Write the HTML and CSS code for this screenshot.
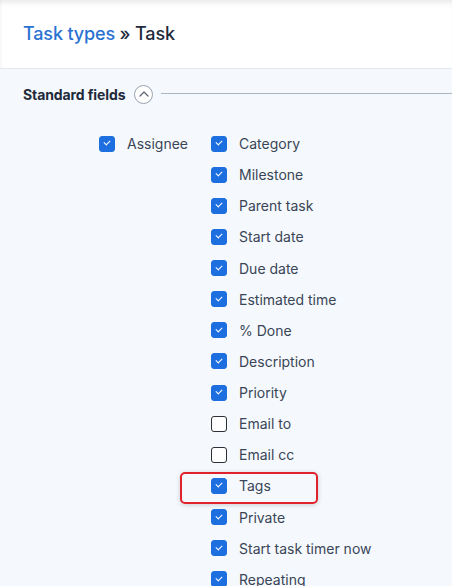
FILE: index.html
```html
<!DOCTYPE html>
<html>
<head>
<meta charset="utf-8">
<link rel="stylesheet" href="styles.css">
</head>
<body>
<header class="header">
  <h1 class="title"><a class="crumb">Task types</a> » Task</h1>
</header>
<main class="content">
  <div class="section-head">
    <span class="section-title">Standard fields</span>
    <span class="toggle">
      <svg width="12" height="8" viewBox="0 0 12 8"><path d="M2 6 L6 2 L10 6" fill="none" stroke="#5a6472" stroke-width="1.2" stroke-linecap="round" stroke-linejoin="round"/></svg>
    </span>
    <span class="rule"></span>
  </div>
  <div class="fields">
    <div class="col">
      <label class="field"><span class="cb on"></span>Assignee</label>
    </div>
    <div class="col">
      <label class="field"><span class="cb on"></span>Category</label>
      <label class="field"><span class="cb on"></span>Milestone</label>
      <label class="field"><span class="cb on"></span>Parent task</label>
      <label class="field"><span class="cb on"></span>Start date</label>
      <label class="field"><span class="cb on"></span>Due date</label>
      <label class="field"><span class="cb on"></span>Estimated time</label>
      <label class="field"><span class="cb on"></span>% Done</label>
      <label class="field"><span class="cb on"></span>Description</label>
      <label class="field"><span class="cb on"></span>Priority</label>
      <label class="field"><span class="cb"></span>Email to</label>
      <label class="field"><span class="cb"></span>Email cc</label>
      <label class="field highlight"><span class="cb on"></span>Tags</label>
      <label class="field"><span class="cb on"></span>Private</label>
      <label class="field"><span class="cb on"></span>Start task timer now</label>
      <label class="field"><span class="cb on"></span>Repeating</label>
    </div>
  </div>
</main>
</body>
</html>
```
FILE: styles.css
```css
html, body {
  margin: 0;
  padding: 0;
}
body {
  font-family: Inter, "Noto Sans", sans-serif;
  background: #f5f9fd;
  overflow: hidden;
  height: 586px;
}
.header {
  height: 69px;
  background: #fff;
  border-bottom: 1px solid #e2e8ef;
  box-shadow: inset 0 6px 6px -4px rgba(0,0,0,0.10), inset 3px 0 4px -3px rgba(0,0,0,0.06);
  display: flex;
  align-items: center;
  padding-left: 23px;
  box-sizing: border-box;
}
.title {
  margin: 0;
  font-size: 18px;
  font-weight: 500;
  color: #1e2a3b;
  letter-spacing: -0.15px;
  position: relative;
  top: -1px;
}
.crumb {
  color: #2a72d2;
}
.content {
  padding: 15px 0 0 23px;
}
.section-head {
  display: flex;
  align-items: center;
  height: 20px;
}
.section-title {
  font-size: 14px;
  font-weight: 700;
  color: #1e2a3b;
  letter-spacing: -0.1px;
}
.toggle {
  width: 17px;
  height: 17px;
  border: 1px solid #98a2ae;
  border-radius: 50%;
  margin-left: 9px;
  display: flex;
  align-items: center;
  justify-content: center;
  background: #fff;
}
.toggle svg {
  margin-top: -1px;
}
.rule {
  flex: 1;
  height: 1px;
  background: #a9b6c4;
  margin-left: 8px;
  margin-top: -1px;
}
.fields {
  display: flex;
  padding-left: 76px;
  margin-top: 24px;
}
.col {
  display: flex;
  flex-direction: column;
}
.col:first-child {
  width: 112px;
}
.field {
  display: flex;
  align-items: center;
  height: 31.14px;
  font-size: 14px;
  color: #3a4557;
  position: relative;
  white-space: nowrap;
}
.cb {
  width: 16px;
  height: 16px;
  box-sizing: border-box;
  border-radius: 3px;
  border: 1.5px solid #2b2f36;
  background: #fff;
  margin-right: 12px;
  position: relative;
}
.cb.on {
  background: #1d6fe0;
  border-color: #1d6fe0;
}
.cb.on::after {
  content: "";
  position: absolute;
  left: 4px;
  top: 3.5px;
  width: 5px;
  height: 3px;
  border-left: 1.6px solid #fff;
  border-bottom: 1.6px solid #fff;
  transform: rotate(-45deg);
}
.highlight::before {
  content: "";
  position: absolute;
  left: -31px;
  top: 2px;
  width: 138px;
  height: 32px;
  border: 2px solid #e0222b;
  border-radius: 5px;
  box-sizing: border-box;
  box-shadow: 0 1px 5px rgba(0,0,0,0.18);
}
```
